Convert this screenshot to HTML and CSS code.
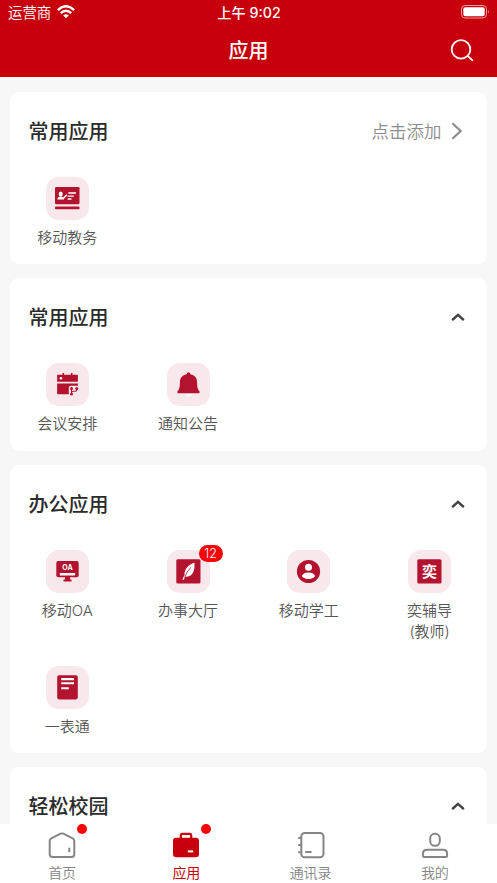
FILE: index.html
```html
<!DOCTYPE html>
<html lang="zh-CN">
<head>
<meta charset="UTF-8">
<title>应用</title>
<link rel="stylesheet" href="styles.css">
</head>
<body>
<div class="app">
  <header class="header">
    <div class="status">
      <div class="carrier"><span>运营商</span>
        <svg width="18" height="14" viewBox="0 0 18 14" fill="none" stroke="#fff" stroke-width="2.5"><path d="M.9 5.1Q9-2.6 17.1 5.1M3.8 8.2Q9 3.3 14.2 8.2"/><path d="M6.2 10.5Q9 8 11.8 10.5L9 13.3Z" fill="#fff" stroke="none"/></svg>
      </div>
      <div class="time">上午 9:02</div>
      <div class="battery"><svg width="29" height="14" viewBox="0 0 29 14"><rect x=".5" y=".5" width="25" height="12.5" rx="3.6" fill="none" stroke="#ee9ba0"/><rect x="2.3" y="2.3" width="21.4" height="9" rx="2" fill="#fff"/><path d="M27 4.8q1.6 2 0 4z" fill="#ee9ba0"/></svg></div>
    </div>
    <div class="navbar">
      <h1>应用</h1>
      <svg class="search" width="24" height="24" viewBox="0 0 24 24" fill="none" stroke="#fff" stroke-width="1.8" stroke-linecap="round"><circle cx="11" cy="11.4" r="9.3"/><path d="M17.8 18.2l4.4 4"/></svg>
    </div>
  </header>

  <main class="content">
    <section class="card">
      <div class="card-head"><h2>常用应用</h2>
        <div class="add"><span>点击添加</span><svg width="12" height="18" viewBox="0 0 12 18" fill="none" stroke="#8c8c8c" stroke-width="2.2"><path d="M1.4 1.2L9.7 9 1.4 16.8"/></svg></div>
      </div>
      <div class="grid">
        <div class="item"><div class="tile"><svg viewBox="0 0 43 43"><g fill="#b4132f"><rect x="9" y="10" width="24.5" height="17.2" rx="1.2"/><rect x="9" y="29.6" width="24.5" height="2.7" rx=".8"/></g><g fill="#fff"><ellipse cx="14.7" cy="17.1" rx="2" ry="2.5"/><path d="M11.3 22.5q.1-2.3 2.4-2.9h2q2 .7 2.3 2.9z"/></g><path d="M17 21.7l3.8-4M22.3 16h7.7M21.7 19.1h6.1M21.7 22h3.8" fill="none" stroke="#fff" stroke-width="1.4"/></svg></div><p>移动教务</p></div>
      </div>
    </section>

    <section class="card">
      <div class="card-head"><h2>常用应用</h2><svg class="chev" viewBox="0 0 14 8"><path d="M1.9 6.5L7 1.9l5.1 4.6"/></svg></div>
      <div class="grid">
        <div class="item"><div class="tile"><svg viewBox="0 0 43 43"><path fill="#b4132f" d="M11.7 11.7h4.8V10h1.6v1.7h6.8V10h1.6v1.7h4.8q.6 0 .6.6v6.4H11.1v-6.4q0-.6.6-.6zM11.1 20.6h20.8v2.1h-7.6q-1.5 0-1.5 1.5v7h-11q-.7 0-.7-.7z"/><circle cx="14.9" cy="15.3" r="1.3" fill="#fff"/><g fill="none" stroke="#b4132f" stroke-width="1.1"><path d="M25.5 25.5V32M30.7 26v1.1q0 1.1-1.2 1.1h-2.1q-1.4 0-1.8 1.5"/></g><g fill="#b4132f"><circle cx="25.5" cy="25.5" r="1.5"/><circle cx="30.7" cy="25.5" r="1.5"/><circle cx="25.5" cy="31.2" r="1.4"/></g></svg></div><p>会议安排</p></div>
        <div class="item"><div class="tile"><svg viewBox="0 0 43 43"><path fill="#b4132f" d="M21.5 9.3q1.7 0 1.9 1.9c4.2.8 6.7 3.9 6.7 7.8 0 5 .6 7.4 2.3 9.2.7.8.3 2-.7 2H11.3c-1 0-1.4-1.2-.7-2 1.7-1.8 2.3-4.2 2.3-9.2 0-3.9 2.5-7 6.7-7.8q.2-1.9 1.9-1.9z"/><path fill="#fff" d="M18.2 31h6.6q-.8 2.3-3.3 2.3T18.2 31z"/></svg></div><p>通知公告</p></div>
      </div>
    </section>

    <section class="card">
      <div class="card-head"><h2>办公应用</h2><svg class="chev" viewBox="0 0 14 8"><path d="M1.9 6.5L7 1.9l5.1 4.6"/></svg></div>
      <div class="grid">
        <div class="item"><div class="tile"><svg viewBox="0 0 43 43"><g fill="#b4132f"><rect x="10.3" y="11" width="22.4" height="16.3" rx="2"/><path d="M19 27h5v2.4h1.5v2.2h-8v-2.2H19z"/></g><rect x="13.8" y="23" width="15.4" height="2.5" rx=".5" fill="#fff"/><text class="oa" x="21.5" y="20.2">OA</text></svg></div><p>移动OA</p></div>
        <div class="item"><div class="tile"><svg viewBox="0 0 43 43"><rect x="9.3" y="9.2" width="24.2" height="24.4" rx="1.5" fill="#b4132f"/><path fill="#fff" d="M27.4 12.8c-6.2 1.7-10.5 7.2-9.8 12.1-.8 1.5-1.8 3-2.1 4.8h1.3l1.3-2.9c7.1.6 10.2-5.7 9.3-14z"/><path d="M17.6 27.4q2-5.4 6.1-10" fill="none" stroke="#b4132f" stroke-width=".8"/></svg><span class="badge">12</span></div><p>办事大厅</p></div>
        <div class="item"><div class="tile"><svg viewBox="0 0 43 43"><circle cx="21.5" cy="21.5" r="11.6" fill="#b4132f"/><circle cx="21.5" cy="17.2" r="3.5" fill="#fff"/><path fill="#fff" d="M14.8 25.9c2-4.6 11.4-4.6 13.4 0-3.3 4.2-10.1 4.2-13.4 0z"/></svg></div><p>移动学工</p></div>
        <div class="item"><div class="tile"><svg viewBox="0 0 43 43"><rect x="9.3" y="9.2" width="24.2" height="24.4" rx="1.5" fill="#b4132f"/><text class="yi" x="21.5" y="26.9">奕</text></svg></div><p>奕辅导<br>(教师)</p></div>
        <div class="item"><div class="tile"><svg viewBox="0 0 43 43"><rect x="11.2" y="9.2" width="20.6" height="24.2" rx="1.8" fill="#b4132f"/><path d="M15.2 13.1H28M15.2 17.3H28M15.2 22.2h7.6" fill="none" stroke="#fff" stroke-width="2.1"/></svg></div><p>一表通</p></div>
      </div>
    </section>

    <section class="card">
      <div class="card-head"><h2>轻松校园</h2><svg class="chev" viewBox="0 0 14 8"><path d="M1.9 6.5L7 1.9l5.1 4.6"/></svg></div>
    </section>
  </main>

  <nav class="tabs">
    <div class="tab"><div class="tab-icon"><svg viewBox="0 0 28 28"><path d="M1.7 10q0-1.8 1.6-2.6l9.3-4.7q1.4-.6 2.8 0l9.3 4.7q1.6.8 1.6 2.6v13.2q0 2.7-2.7 2.7H4.4q-2.7 0-2.7-2.7z"/><path d="M21.3 16.7v4.5"/></svg><i class="dot"></i></div><span>首页</span></div>
    <div class="tab active"><div class="tab-icon"><svg viewBox="0 0 28 28"><path d="M8.8 7V4.6q0-1.7 1.7-1.7h7q1.7 0 1.7 1.7V7" stroke-width="2.2"/><rect x="1" y="6.7" width="26" height="19.6" rx="3.2" fill="#c7000b" stroke="none"/><path d="M15.8 20.4h5.4" stroke="#fff" stroke-width="2"/></svg><i class="dot"></i></div><span>应用</span></div>
    <div class="tab"><div class="tab-icon"><svg viewBox="0 0 28 28"><rect x="4.3" y="1.9" width="22.2" height="24.4" rx="3.5"/><path d="M1.2 7h3M1.2 14.1h3M1.2 21.3h3M8.3 21h6.2"/></svg></div><span>通讯录</span></div>
    <div class="tab"><div class="tab-icon"><svg viewBox="0 0 28 28"><rect x="9.2" y="2.8" width="9.6" height="12" rx="4.6"/><path d="M1.9 22.8q0-4.1 4.1-4.1h16q4.1 0 4.1 4.1v1.4q0 1.9-1.9 1.9H3.8q-1.9 0-1.9-1.9z"/></svg></div><span>我的</span></div>
  </nav>
</div>
</body>
</html>
```

FILE: styles.css
```css
* { box-sizing: border-box; }
body, h1, h2, p { margin: 0; }
body {
  font-family: "Noto Sans CJK SC", sans-serif;
  font-weight: 350;
  color: #555;
}
svg { display: block; flex: none; }
.app {
  height: 883px;
  display: flex;
  flex-direction: column;
  overflow: hidden;
  background: #f7f7f7;
}
.header { height: 77px; flex: none; background: #c7000b; color: #fff; }
.status {
  height: 25px;
  padding: 0 7px 0 8px;
  display: grid;
  grid-template-columns: 1fr auto 1fr;
  align-items: center;
}
.carrier { display: flex; align-items: center; gap: 6px; font-size: 14.4px; line-height: 25px; }
.carrier span { margin-top: -2px; }
.carrier svg { margin-top: -1px; }
.time { font-family: Inter, "Noto Sans CJK SC", sans-serif; font-size: 14.2px; line-height: 25px; font-weight: 500; }
.battery { justify-self: end; margin-top: -1px; }
.navbar {
  height: 50px;
  padding: 0 23px;
  display: grid;
  grid-template-columns: 1fr auto 1fr;
  align-items: center;
}
.navbar h1 { grid-column: 2; font-size: 20px; line-height: 50px; font-weight: 500; }
.search { justify-self: end; }
.content {
  flex: 1;
  min-height: 0;
  overflow: hidden;
  padding: 14.5px 10px 0;
  display: flex;
  flex-direction: column;
  gap: 14.3px;
}
.card { flex: none; background: #fff; border-radius: 9px; padding-bottom: 16.5px; }
.card-head {
  height: 78px;
  padding: 0 22px 0 18.5px;
  display: flex;
  align-items: center;
  justify-content: space-between;
}
.card-head h2 { font-size: 20px; line-height: 30px; font-weight: 500; color: #2b2b2b; }
.add { display: flex; align-items: center; gap: 9px; margin-right: 2.5px; font-size: 17.5px; line-height: 30px; color: #8c8c8c; }
.chev { width: 14px; height: 8px; fill: none; stroke: #444; stroke-width: 2.4; stroke-linecap: round; }
.grid {
  display: grid;
  grid-template-columns: repeat(4, 1fr);
  row-gap: 23.5px;
  margin: 7px -3px 0;
}
.item { display: flex; flex-direction: column; align-items: center; gap: 7px; }
.item p { font-family: Inter, "Noto Sans CJK SC", sans-serif; font-size: 15px; line-height: 21px; text-align: center; }
.tile { position: relative; width: 43px; height: 43px; border-radius: 13px; background: #f8e7eb; }
.badge {
  position: absolute;
  left: 32px;
  top: -5px;
  width: 24px;
  height: 17px;
  border-radius: 9px;
  background: #f50505;
  color: #fff;
  font: 300 12.5px/17px Inter, sans-serif;
  text-align: center;
}
.oa { font: 700 7px Inter, sans-serif; fill: #fff; text-anchor: middle; }
.yi { font: 700 15px "Noto Sans CJK SC", sans-serif; fill: #fff; text-anchor: middle; }
.tabs { height: 59px; flex: none; background: #fff; display: grid; grid-template-columns: repeat(4, 1fr); }
.tab { display: flex; flex-direction: column; align-items: center; padding-top: 7px; color: #858585; font-size: 14px; line-height: 20px; }
.tab-icon { position: relative; width: 28px; height: 28px; margin-bottom: 3px; }
.tab-icon svg { fill: none; stroke: #858585; stroke-width: 2; }
.active { color: #c7000b; font-weight: 400; }
.active .tab-icon svg { stroke: #c7000b; }
.dot { position: absolute; left: 29px; top: -7.5px; width: 10px; height: 10px; border-radius: 50%; background: #f50505; }
```
